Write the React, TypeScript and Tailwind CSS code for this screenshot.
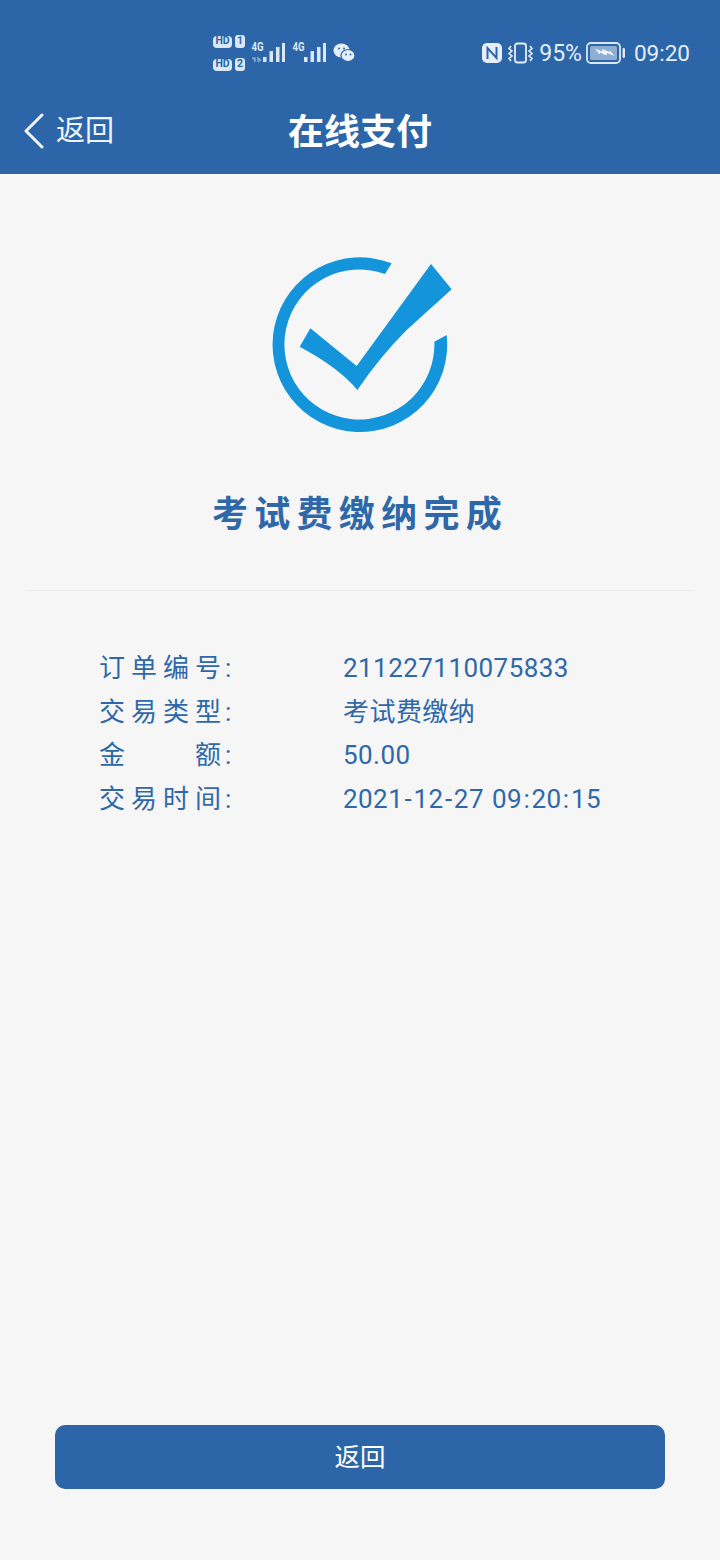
import React from "react";

const cjk = { fontFamily: "Roboto, 'Noto Sans CJK SC', sans-serif" };

function Sim({ hd, n }: { hd: string; n: string }) {
  return (
    <div className="flex items-center gap-[3px] h-[13px]">
      <span className="flex items-center justify-center w-[19px] h-[12px] rounded-[4px] bg-[#dbe7f4] text-[#2c65a8] text-[10.500px] leading-none font-bold">{hd}</span>
      <span className="flex items-center justify-center w-[10px] h-[13px] rounded-[3px] bg-[#dbe7f4] text-[#2c65a8] text-[10.500px] leading-none font-bold">{n}</span>
    </div>
  );
}

function Signal({ dim }: { dim?: boolean }) {
  return (
    <div className="w-[34px] h-[26px] relative">
      <svg width="34" height="26" viewBox="0 0 34 26">
        <g fill="#dbe7f4">
          <rect x="12" y="17" width="3.500" height="5" />
          <rect x="18.500" y="11" width="3.500" height="11" />
          <rect x="25" y="7" width="3.500" height="15" />
          <rect x="31" y="3" width="3" height="19" />
        </g>
        {dim && <path d="M1 18h3v4M7 22v-4l2.500 2L7 22" stroke="#7fa3cd" strokeWidth="1.600" fill="#7fa3cd" />}
      </svg>
      <span className="absolute left-[-1px] top-[1px] text-[12px] leading-[12px] font-bold text-[#dbe7f4] scale-x-[0.8]">4G</span>
    </div>
  );
}

function CheckMark() {
  return (
    <svg className="w-[220px] h-[210px]" viewBox="0 0 660 630">
      <path d="M425 70A262 262 0 1 0 590 285L553 305A225 225 0 1 1 405 102Z" fill="#1495db" />
      <path d="M181 265L320 378L543 72L605 148L470 270Q390 350 322 450Q270 385 149 320Z" fill="#1495db" />
    </svg>
  );
}

function Spread({ chars }: { chars: string[] }) {
  return (
    <span className="flex justify-between w-[122px]">
      {chars.map((c, i) => (
        <span key={i}>{c}</span>
      ))}
    </span>
  );
}

function Sep({ c }: { c: string }) {
  return <span className="px-[1.300px]">{c}</span>;
}

const rows: [string[], React.ReactNode][] = [
  [["订", "单", "编", "号"], "211227110075833"],
  [["交", "易", "类", "型"], "考试费缴纳"],
  [["金", "额"], "50.00"],
  [
    ["交", "易", "时", "间"],
    <>
      2021<Sep c="-" />12<Sep c="-" />27<span className="inline-block w-[8px]" />09<Sep c=":" />20<Sep c=":" />15
    </>,
  ],
];

export default function App() {
  return (
    <div className="w-[720px] h-[1560px] flex flex-col bg-[#f6f6f6]" style={cjk}>
      <header className="h-[174px] bg-[#2c65a8] text-white flex flex-col shrink-0">
        <div className="h-[90px] flex items-center pl-[213px] pr-[30px] pt-[16px]">
          <div className="flex flex-col gap-[10px] mr-[6px]">
            <Sim hd="HD" n="1" />
            <Sim hd="HD" n="2" />
          </div>
          <Signal dim />
          <div className="w-[7px]" />
          <Signal />
          <svg className="ml-[7px]" width="22" height="20" viewBox="0 0 22 20">
            <ellipse cx="8.500" cy="7.500" rx="8" ry="7" fill="#e6eef8" />
            <ellipse cx="15" cy="12.500" rx="7" ry="6" fill="#e6eef8" stroke="#2c65a8" strokeWidth="1.200" />
            <circle cx="6" cy="5.500" r="1" fill="#2c65a8" />
            <circle cx="11" cy="5.500" r="1" fill="#2c65a8" />
            <circle cx="13" cy="11.500" r="0.900" fill="#2c65a8" />
            <circle cx="17.500" cy="11.500" r="0.900" fill="#2c65a8" />
          </svg>
          <div className="flex-1" />
          <svg width="20" height="20" viewBox="0 0 20 20">
            <rect width="20" height="20" rx="5" fill="#e6eef8" />
            <path d="M5.500 16V5l9 10V4" stroke="#2c65a8" strokeWidth="2" fill="none" />
          </svg>
          <svg className="ml-[6px]" width="25" height="22" viewBox="0 0 25 22">
            <rect x="7" y="1.500" width="11" height="19" rx="2.500" fill="none" stroke="#e6eef8" strokeWidth="1.800" />
            <path d="M3 4L1 6.500l3 2.500-3 2.500 3 2.500-3 2.500L3 19M22 4l2 2.500-3 2.500 3 2.500-3 2.500 3 2.500L22 19" fill="none" stroke="#e6eef8" strokeWidth="1.600" />
          </svg>
          <span className="ml-[6px] text-[23px] leading-none text-[#e6eef8]">95%</span>
          <svg className="ml-[4px]" width="39" height="22" viewBox="0 0 39 22">
            <rect x="1" y="1" width="33" height="20" rx="4" fill="none" stroke="#dbe7f4" strokeWidth="1.800" />
            <rect x="4" y="4" width="27" height="14" rx="1.500" fill="#8eaed3" />
            <path d="M9 6.500l7 3 .5-2.500 7 3 0-2 5 6-7.500-3-.5 2.500-6.500-3-.5 2z" fill="#f2f6fb" />
            <rect x="36.500" y="6" width="2.500" height="10" rx="1.200" fill="#dbe7f4" />
          </svg>
          <span className="ml-[9px] text-[22.500px] leading-none text-[#e6eef8]">09:20</span>
        </div>
        <div className="flex-1 relative flex items-center justify-center pt-[1px]">
          <div className="absolute left-[23px] top-[23px] flex items-center">
            <svg width="21" height="36" viewBox="0 0 21 36">
              <path d="M19 2L3 18l16 16" fill="none" stroke="#f0f5fa" strokeWidth="3" strokeLinecap="round" strokeLinejoin="round" />
            </svg>
            <span className="ml-[12px] text-[29px] leading-none text-[#f0f5fa]">返回</span>
          </div>
          <h1 className="text-[36px] leading-none font-bold">在线支付</h1>
        </div>
      </header>

      <main className="flex-1 flex flex-col text-[#2f68a8]">
        <div className="flex justify-center pt-[66px]">
          <CheckMark />
        </div>
        <h2 className="mt-[42px] text-center text-[36px] leading-[46px] font-bold tracking-[6.300px]">考试费缴纳完成</h2>
        <div className="mx-[28px] mt-[52px] h-px bg-[#ececec]" />
        <dl className="mt-[56px] pl-[99px] flex flex-col text-[26px] leading-[43.500px]">
          {rows.map(([k, v], i) => (
            <div key={i} className="flex">
              <dt className="flex w-[244px] items-center">
                <Spread chars={k} />
                <span className="ml-[4px]">:</span>
              </dt>
              <dd className="tracking-[0.45px]">{v}</dd>
            </div>
          ))}
        </dl>
        <div className="mt-auto mb-[71px] mx-[55px] h-[64px] rounded-[10px] bg-[#2c65a8] text-white flex items-center justify-center text-[25.500px]">
          返回
        </div>
      </main>
    </div>
  );
}
